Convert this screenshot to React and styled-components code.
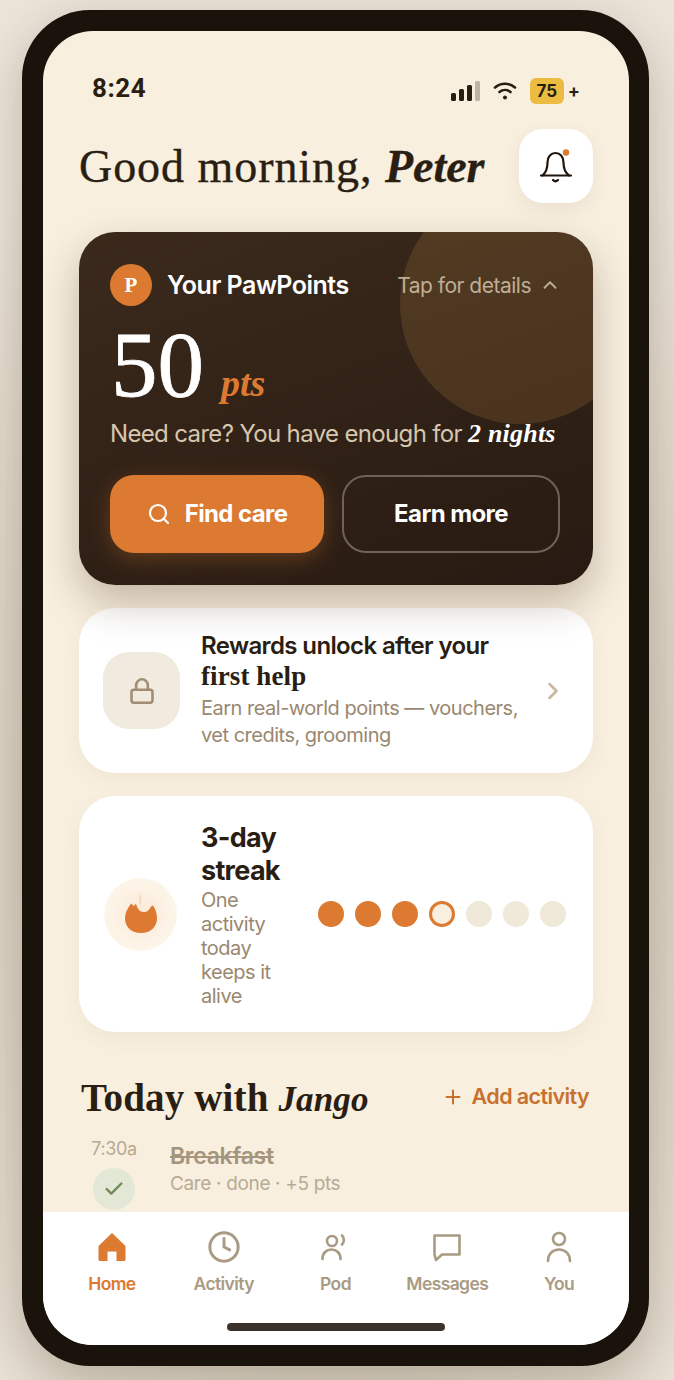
import React from 'react';
import styled, { createGlobalStyle } from 'styled-components';
import { Search, ChevronUp, ChevronRight, Lock, Plus, Check, Clock } from 'lucide-react';

const SANS = '"Inter", "Liberation Sans", sans-serif';
const SERIF = '"Liberation Serif", "DejaVu Serif", serif';

const Global = createGlobalStyle`
  html, body { margin: 0; padding: 0; }
  body { width: 674px; height: 1380px; overflow: hidden; font-family: ${SANS}; background: #ece5da; }
  * { box-sizing: border-box; }
`;

const Page = styled.div`
  width: 674px; height: 1380px; padding: 10px 25px 14px 22px;
  background: radial-gradient(ellipse 75% 60% at 50% 60%, #c4b8a4 0%, #d9d0c0 60%, #ebe4d9 100%);
`;
const Phone = styled.div`
  width: 627px; height: 1356px; padding: 21px 20px 21px 21px;
  background: #1a130c; border-radius: 68px;
  box-shadow: 0 16px 50px rgba(60, 40, 20, .25);
`;
const Screen = styled.div`
  position: relative; width: 586px; height: 1314px; overflow: hidden;
  background: #f8efdf; border-radius: 50px;
`;
const StatusBar = styled.div`
  height: 98px; padding: 44px 49px 0 49px;
  display: flex; justify-content: space-between; align-items: flex-start;
`;
const Time = styled.span`
  font: 700 26px/26px "Roboto", ${SANS}; color: #2a1e13; letter-spacing: .5px;
`;
const StatusIcons = styled.div`
  display: flex; align-items: center; gap: 0; padding-top: 3px;
`;
const Battery = styled.span`
  width: 34px; height: 26px; margin-left: 13px; border-radius: 6px; background: #ebbc41;
  display: flex; align-items: center; justify-content: center;
  font: 700 17px/1 ${SANS}; color: #2a1e13;
`;
const BatteryPlus = styled.span`
  margin-left: 4px; font: 700 18px/1 ${SANS}; color: #2a1e13;
`;
const Content = styled.div`
  padding: 0 36px;
  display: flex; flex-direction: column;
`;
const Header = styled.div`
  height: 74px; display: flex; align-items: center; justify-content: space-between;
`;
const Greeting = styled.h1`
  margin: 2px 0 0; font: 400 46px/1 ${SERIF}; color: #2a1e13; letter-spacing: .95px;
  -webkit-text-stroke: .35px #2a1e13; white-space: nowrap;
  em { font-style: italic; font-weight: 700; letter-spacing: 0; }
`;
const BellButton = styled.div`
  position: relative; width: 74px; height: 74px; border-radius: 24px; background: #fff;
  display: flex; align-items: center; justify-content: center;
  box-shadow: 0 6px 18px rgba(90, 60, 20, .08);
`;
const Hero = styled.section`
  position: relative; z-index: 1; overflow: hidden;
  height: 353px; padding: 32px 32px 32px 31px;
  border-radius: 36px; background: linear-gradient(160deg, #3b2a1c 0%, #281a12 100%);
`;
const HeroWrap = styled.div`
  position: relative; z-index: 1; border-radius: 36px; margin-top: 29px;
  box-shadow: 0 18px 40px rgba(60, 35, 10, .28);
`;
const Glow = styled.div`
  position: absolute; top: -48px; left: 321px; width: 240px; height: 240px; border-radius: 50%;
  background: rgba(222, 160, 80, .16);
`;
const HeroTop = styled.div`
  position: relative; display: flex; align-items: center; height: 42px;
`;
const Coin = styled.div`
  width: 42px; height: 42px; border-radius: 50%; background: #dc7a31; color: #fff;
  display: flex; align-items: center; justify-content: center;
  font: 700 21px/1 ${SERIF};
`;
const HeroLabel = styled.span`
  margin-left: 15px; font: 600 25px/1 ${SANS}; color: #fff; letter-spacing: -.5px;
`;
const TapHint = styled.span`
  margin-left: auto; display: flex; align-items: center; gap: 8px;
  font: 400 21px/1 ${SANS}; color: #bfae94; letter-spacing: -.5px;
`;
const Score = styled.div`
  position: relative; height: 97px; margin-top: 16px; display: flex; align-items: baseline;
`;
const Number = styled.span`
  font: 400 93px/86px ${SERIF}; color: #fff; margin-left: 1px; -webkit-text-stroke: .8px #fff;
`;
const Unit = styled.span`
  margin-left: 17px; font: italic 700 38px/1 ${SERIF}; color: #dc7a31;
`;
const HeroSub = styled.p`
  position: relative; margin: 0; height: 30px;
  font: 400 24px/30px ${SANS}; color: #d6c7ae; letter-spacing: -.65px; white-space: nowrap;
  em { font: italic 700 26px/30px ${SERIF}; color: #fff; letter-spacing: .2px; }
`;
const Actions = styled.div`
  position: relative; margin-top: 26px; display: flex; gap: 18px;
`;
const ActionButton = styled.div`
  height: 78px; width: ${p => p.$w}px; border-radius: 24px;
  display: flex; align-items: center; justify-content: center; gap: 14px;
  font: 700 24px/1 ${SANS}; color: #fff; letter-spacing: -.6px;
  background: ${p => p.$primary ? '#dc7a31' : 'transparent'};
  border: ${p => p.$primary ? 'none' : '2px solid #6e6357'};
  box-shadow: ${p => p.$primary ? '0 6px 22px rgba(220, 122, 49, .3)' : 'none'};
`;
const Card = styled.section`
  margin-top: 23px; background: #fff; border-radius: 36px;
  display: flex; align-items: center;
  height: ${p => p.$h}px; padding: 0 ${p => p.$pr}px 0 ${p => p.$pl}px;
  box-shadow: 0 6px 20px rgba(120, 80, 30, .06);
`;
const LockTile = styled.div`
  flex: none; width: 77px; height: 77px; border-radius: 26px; background: #f0eadf;
  display: flex; align-items: center; justify-content: center; color: #a08d72;
`;
const CardText = styled.div`
  margin-left: ${p => p.$ml}px; flex: ${p => p.$grow ? 1 : 'none'}; width: ${p => p.$w || 'auto'};
  padding-bottom: ${p => p.$pb || 0}px;
`;
const RewardTitle = styled.div`
  margin-bottom: 3px;
  font: 600 24px/31px ${SANS}; color: #2a1e13; letter-spacing: -.62px;
  b { display: block; font: 700 27px/31px ${SERIF}; letter-spacing: .1px; }
`;
const CardDesc = styled.div`
  margin-top: ${p => p.$mt || 0}px;
  font: 400 20px/${p => p.$lh}px ${SANS}; color: #9a8770; letter-spacing: -.5px;
`;
const FlameCircle = styled.div`
  flex: none; width: 73px; height: 73px; border-radius: 50%;
  background: radial-gradient(circle, #fbe9d6 0%, #fdf5ea 70%);
  display: flex; align-items: center; justify-content: center;
`;
const StreakTitle = styled.div`
  font: 700 27px/33px ${SANS}; color: #2a1e13; letter-spacing: -.7px;
`;
const Dots = styled.div`
  margin-left: 21px; display: flex; gap: 11px;
`;
const Dot = styled.span`
  width: 26px; height: 26px; border-radius: 50%;
  background: ${p => p.$state === 'done' ? '#dc7a31' : p.$state === 'today' ? '#f8efdf' : '#f0e9da'};
  border: ${p => p.$state === 'today' ? '3px solid #dc7a31' : 'none'};
`;
const SectionHead = styled.div`
  margin-top: 42px; padding: 0 4px 0 2px; height: 46px;
  display: flex; align-items: center; justify-content: space-between;
`;
const SectionTitle = styled.h2`
  margin: 0; font: 700 39px/1 ${SERIF}; color: #2a1e13; letter-spacing: .15px;
  em { font-size: 35px; font-style: italic; font-weight: 700; }
`;
const AddLink = styled.span`
  display: flex; align-items: center; gap: 8px;
  font: 600 21.5px/1 ${SANS}; color: #c8702d; letter-spacing: -.6px;
`;
const ActivityRow = styled.div`
  margin-top: 18px; padding-left: 12px; display: flex;
`;
const TimeCol = styled.div`
  width: 46px; display: flex; flex-direction: column; align-items: center; gap: 8px;
  font: 400 18px/22px ${SANS}; color: #b8a98f; letter-spacing: -.4px;
`;
const CheckDot = styled.div`
  width: 42px; height: 42px; border-radius: 50%; background: #e3e8d6; color: #6f8a57;
  display: flex; align-items: center; justify-content: center;
`;
const ActivityBody = styled.div`
  margin-left: 33px; padding-top: 4px;
`;
const ActivityName = styled.div`
  font: 600 23px/28px ${SANS}; color: #a5957c; text-decoration: line-through; letter-spacing: -.3px;
`;
const ActivityMeta = styled.div`
  margin-top: 1px; font: 400 19px/26px ${SANS}; color: #b8ab95; letter-spacing: -.35px;
`;
const TabBar = styled.nav`
  position: absolute; left: 0; right: 0; bottom: 0; height: 133px; background: #fff;
  display: flex; padding: 0 14px 0 13px;
`;
const Tab = styled.div`
  flex: 1; display: flex; flex-direction: column; align-items: center; padding-top: 16px;
  color: ${p => p.$active ? '#dc7a31' : '#a99b83'};
`;
const TabIcon = styled.div`
  height: 38px; display: flex; align-items: center; justify-content: center;
`;
const TabLabel = styled.span`
  margin-top: 6px; font: 600 17.5px/24px ${SANS}; letter-spacing: -.6px;
`;
const HomeIndicator = styled.div`
  position: absolute; left: 184px; bottom: 14px; width: 218px; height: 8px; border-radius: 4px; background: #3b332b;
`;

const Signal = () => (
  <svg width="30" height="20" viewBox="0 0 30 20">
    <rect x="0" y="12" width="5" height="8" rx="1.5" fill="#2a1e13" />
    <rect x="8" y="8" width="5" height="12" rx="1.5" fill="#2a1e13" />
    <rect x="16" y="4" width="5" height="16" rx="1.5" fill="#2a1e13" />
    <rect x="24" y="0" width="5" height="20" rx="1.5" fill="#bdb4a6" />
  </svg>
);
const Wifi = () => (
  <svg width="24" height="20" viewBox="0 0 24 20" fill="none" stroke="#2a1e13" strokeWidth="2.6" strokeLinecap="round" style={{ marginLeft: 12 }}>
    <path d="M2 6.5C8 1.5 16 1.5 22 6.5" />
    <path d="M6.5 11C9.8 8.3 14.2 8.3 17.5 11" />
    <circle cx="12" cy="16.5" r="2" fill="#2a1e13" stroke="none" />
  </svg>
);
const Bell = () => (
  <svg width="36" height="36" viewBox="0 0 36 36" fill="none" stroke="#1f150d" strokeWidth="2.2" strokeLinecap="round">
    <path d="M3 27.5H33" />
    <path d="M4.5 27.5C8.5 24 9.5 20 9.5 14.5C9.5 8.5 13 5 17.5 5C22 5 25.5 8.5 25.5 14.5C25.5 20 26.5 24 31 27.5" />
    <path d="M15 32C16.5 33.5 18.5 33.5 20 32" />
    <circle cx="28" cy="4.5" r="3.2" fill="#dc7a31" stroke="none" />
  </svg>
);
const Flame = () => (
  <svg width="34" height="46" viewBox="0 0 34 46" style={{ marginTop: -6 }}>
    <path d="M17 45C7.5 45 1 39 1 30.5C1 25 3.5 20.5 7 15.5L10 18L12 15.5C13.5 21 15.5 24 19.5 24C23.5 24 25.5 22 27 18.5L29 17.5C31.5 21 33 25.5 33 30C33 39 26.5 45 17 45Z" fill="#dc7a31" />
    <path d="M16 18C14.5 14 15 9 16.5 4C17 9 18.5 12 16 18Z" fill="#f6d9bd" />
  </svg>
);
const Home = () => (
  <svg width="30" height="30" viewBox="0 0 30 30" fill="currentColor">
    <path d="M15 1L28.5 14V27.5C28.5 28.4 27.9 29 27 29H19.5V19.5H10.5V29H3C2.1 29 1.5 28.4 1.5 27.5V14Z" />
  </svg>
);
const Pod = () => (
  <svg width="30" height="30" viewBox="0 0 30 30" fill="none" stroke="currentColor" strokeWidth="2.6" strokeLinecap="round">
    <circle cx="12" cy="9" r="5" />
    <path d="M2.5 27C2.5 21 6.5 17.5 11.5 17.5C16.5 17.5 20.5 21 20.5 27" />
    <path d="M22 3.5C24.5 6 24.5 10 22 12.5" />
  </svg>
);
const Bubble = () => (
  <svg width="32" height="32" viewBox="0 0 32 32" fill="none" stroke="currentColor" strokeWidth="2.6" strokeLinejoin="round">
    <path d="M3.5 4.5H28.5V23.5H11L5 29L3.5 23.5Z" />
  </svg>
);
const User = () => (
  <svg width="30" height="32" viewBox="0 0 30 32" fill="none" stroke="currentColor" strokeWidth="2.6" strokeLinecap="round">
    <circle cx="15" cy="8" r="6" />
    <path d="M4 30C4 23 8.5 18.5 15 18.5C21.5 18.5 26 23 26 30" />
  </svg>
);

const tabs = [
  { label: 'Home', icon: <Home />, active: true },
  { label: 'Activity', icon: <Clock size={34} strokeWidth={2.1} /> },
  { label: 'Pod', icon: <Pod /> },
  { label: 'Messages', icon: <Bubble /> },
  { label: 'You', icon: <User /> },
];

export default function App() {
  return (
    <>
      <Global />
      <Page>
        <Phone>
          <Screen>
            <StatusBar>
              <Time>8:24</Time>
              <StatusIcons>
                <Signal />
                <Wifi />
                <Battery>75</Battery>
                <BatteryPlus>+</BatteryPlus>
              </StatusIcons>
            </StatusBar>
            <Content>
              <Header>
                <Greeting>Good morning, <em>Peter</em></Greeting>
                <BellButton><Bell /></BellButton>
              </Header>
              <HeroWrap>
                <Hero>
                  <Glow />
                  <HeroTop>
                    <Coin>P</Coin>
                    <HeroLabel>Your PawPoints</HeroLabel>
                    <TapHint>Tap for details <ChevronUp size={22} strokeWidth={2} /></TapHint>
                  </HeroTop>
                  <Score>
                    <Number>50</Number>
                    <Unit>pts</Unit>
                  </Score>
                  <HeroSub>Need care? You have enough for <em>2 nights</em></HeroSub>
                  <Actions>
                    <ActionButton $primary $w={214}><Search size={24} strokeWidth={2.2} />Find care</ActionButton>
                    <ActionButton $w={218}>Earn more</ActionButton>
                  </Actions>
                </Hero>
              </HeroWrap>
              <Card $h={165} $pl={24} $pr={26}>
                <LockTile><Lock size={28} strokeWidth={2.2} /></LockTile>
                <CardText $ml={21} $grow $pb={3}>
                  <RewardTitle>Rewards unlock after your <b>first help</b></RewardTitle>
                  <CardDesc $lh={27}>Earn real-world points — vouchers, vet credits, grooming</CardDesc>
                </CardText>
                <ChevronRight size={28} strokeWidth={2.2} color="#c8b89f" />
              </Card>
              <Card $h={236} $pl={25} $pr={27}>
                <FlameCircle><Flame /></FlameCircle>
                <CardText $ml={24} $w="96px" $pb={0}>
                  <StreakTitle>3-day streak</StreakTitle>
                  <CardDesc $lh={24} $mt={1}>One activity today keeps it alive</CardDesc>
                </CardText>
                <Dots>
                  {['done', 'done', 'done', 'today', 'off', 'off', 'off'].map((s, i) => <Dot key={i} $state={s} />)}
                </Dots>
              </Card>
              <SectionHead>
                <SectionTitle>Today with <em>Jango</em></SectionTitle>
                <AddLink><Plus size={22} strokeWidth={2.2} />Add activity</AddLink>
              </SectionHead>
              <ActivityRow>
                <TimeCol>
                  7:30a
                  <CheckDot><Check size={22} strokeWidth={2.6} /></CheckDot>
                </TimeCol>
                <ActivityBody>
                  <ActivityName>Breakfast</ActivityName>
                  <ActivityMeta>Care · done · +5 pts</ActivityMeta>
                </ActivityBody>
              </ActivityRow>
            </Content>
            <TabBar>
              {tabs.map(t => (
                <Tab key={t.label} $active={t.active}>
                  <TabIcon>{t.icon}</TabIcon>
                  <TabLabel>{t.label}</TabLabel>
                </Tab>
              ))}
              <HomeIndicator />
            </TabBar>
          </Screen>
        </Phone>
      </Page>
    </>
  );
}
